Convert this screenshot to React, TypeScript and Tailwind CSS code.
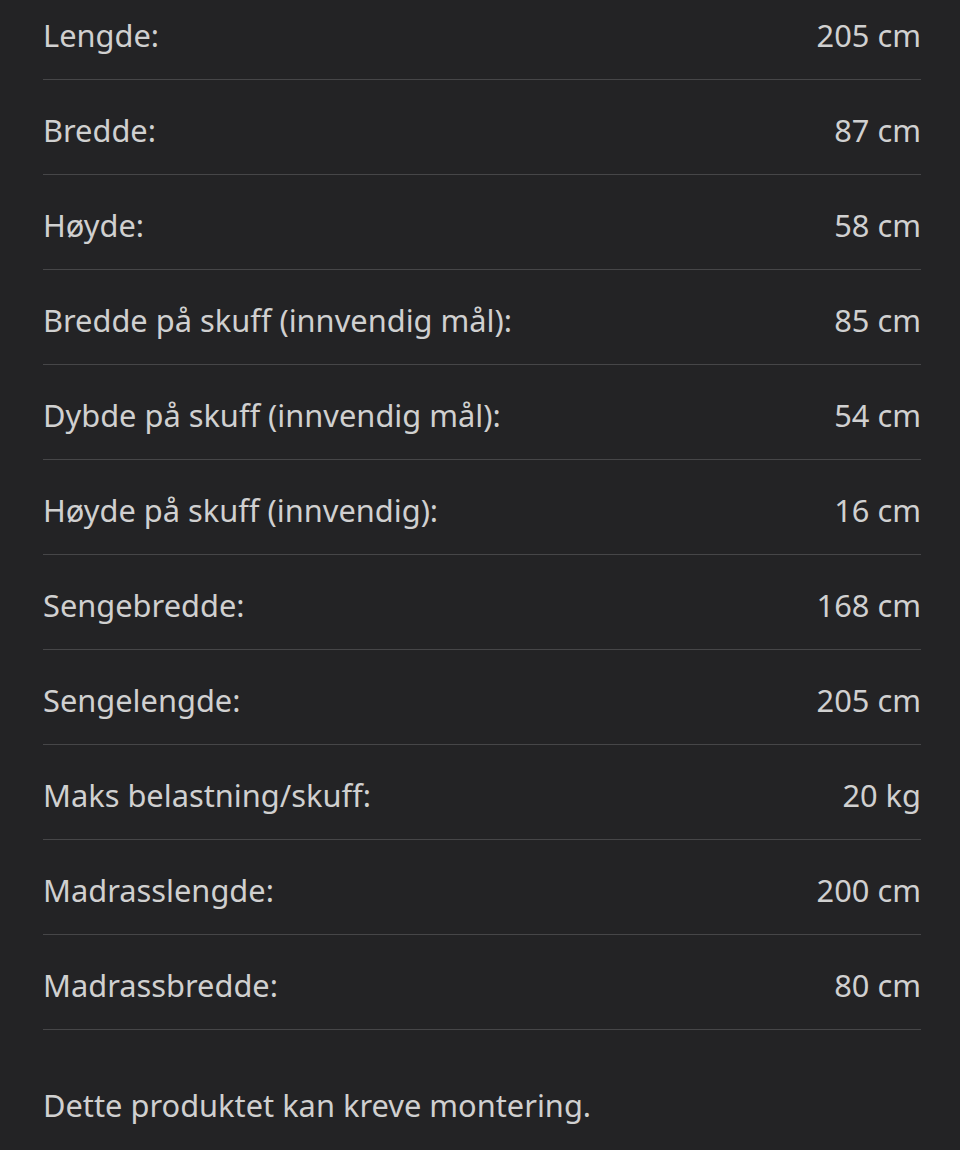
const specs = [
  { label: "Lengde:", value: "205 cm" },
  { label: "Bredde:", value: "87 cm" },
  { label: "Høyde:", value: "58 cm" },
  { label: "Bredde på skuff (innvendig mål):", value: "85 cm" },
  { label: "Dybde på skuff (innvendig mål):", value: "54 cm" },
  { label: "Høyde på skuff (innvendig):", value: "16 cm" },
  { label: "Sengebredde:", value: "168 cm" },
  { label: "Sengelengde:", value: "205 cm" },
  { label: "Maks belastning/skuff:", value: "20 kg" },
  { label: "Madrasslengde:", value: "200 cm" },
  { label: "Madrassbredde:", value: "80 cm" },
];

export default function App() {
  return (
    <div
      className="w-[960px] h-[1150px] overflow-hidden bg-[#232325] pl-[43px] pr-[39px] text-[#d0d0d0]"
      style={{ fontFamily: '"Noto Sans", "Open Sans", sans-serif' }}
    >
      <div className="-mt-[15px]">
        {specs.map((item) => (
          <div
            key={item.label}
            className="flex h-[95px] items-center justify-between border-b border-[#464648] pt-[7px] text-[30.8px]"
          >
            <span>{item.label}</span>
            <span>{item.value}</span>
          </div>
        ))}
      </div>
      <p className="mt-[52px] text-[30.8px]">Dette produktet kan kreve montering.</p>
    </div>
  );
}
